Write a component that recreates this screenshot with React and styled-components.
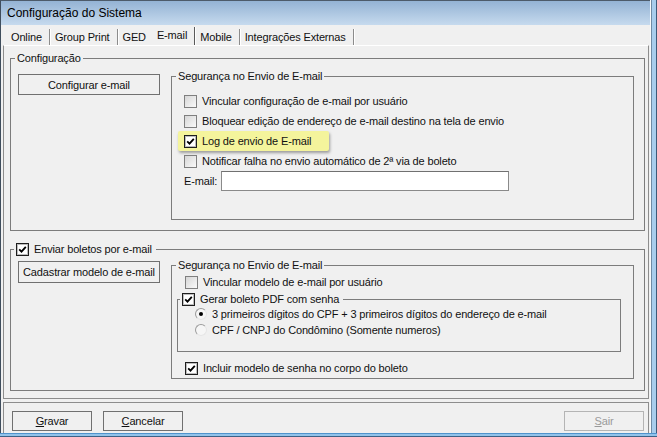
import React from 'react';
import styled, { createGlobalStyle } from 'styled-components';

const GlobalStyle = createGlobalStyle`
  html, body { margin: 0; padding: 0; background: #f0f0f0; }
  body {
    font-family: "Liberation Sans", Arial, sans-serif;
    font-size: 11px;
    letter-spacing: -0.15px;
    color: #111;
  }
  * { box-sizing: border-box; }
`;

const Window = styled.div`
  width: 657px;
  height: 437px;
  display: flex;
  flex-direction: column;
  background: #f0f0f0;
  overflow: hidden;
`;

const Frame = styled.div`
  flex: 1;
  display: flex;
  min-height: 0;
`;

const Main = styled.div`
  width: 650px;
  display: flex;
  flex-direction: column;
  border-left: 1px solid #3f4d5c;
  border-top: 1px solid #4d5b6a;
`;

const RightEdge = styled.div`
  width: 7px;
  background: linear-gradient(to right, #fafafa 0 1px, #6f8aa5 1px 2px, #a9cdec 2px 6px, #3d5a78 6px);
`;

const BottomEdge = styled.div`
  height: 4px;
  flex: none;
  background: linear-gradient(to bottom, #4f93cc 0 1px, #92c3ea 1px 3px, #3b6286 3px);
`;

const TitleBar = styled.div`
  height: 24px;
  flex: none;
  display: flex;
  align-items: center;
  padding-left: 6px;
  background: linear-gradient(#94b3d4, #c6daee);
  font-size: 12px;
  letter-spacing: 0;
  color: #000;
`;

const TabStrip = styled.div`
  height: 20px;
  flex: none;
  display: flex;
  align-items: flex-end;
  padding-left: 5px;
`;

const Tab = styled.div`
  height: ${p => (p.$active ? 18 : 16)}px;
  line-height: 16px;
  padding: 0 7px 0 ${p => (p.$first ? 5 : 4)}px;
  border-right: ${p => (p.$noSep ? 'none' : `1px solid ${p.$active ? '#5a5a5a' : '#8c8c8c'}`)};
  box-shadow: ${p => (p.$noSep ? 'none' : '1px 0 0 #ffffff')};
  margin-right: ${p => (p.$noSep ? 0 : 1)}px;
`;

const TabPanel = styled.div`
  height: 354px;
  flex: none;
  margin: 0 1px 0 2px;
  border: 1px solid #8d8d8d;
  border-top-color: #ffffff;
  padding: 5px 3px 0 6px;
  display: flex;
  flex-direction: column;
`;

const GroupBox = styled.fieldset`
  margin: ${p => p.$m || '0'};
  padding: ${p => p.$p || '0'};
  border: 1px solid #7c7c7c;
  min-width: 0;
  flex: ${p => (p.$grow ? 1 : 'none')};
`;

const Legend = styled.legend`
  margin-left: ${p => p.$ml ?? 4}px;
  padding: 0 2px;
  height: 14px;
  line-height: 14px;
`;

const LegendInner = styled.span`
  display: inline-flex;
  align-items: center;
  gap: 5px;
  height: 14px;
  padding-right: 2px;
`;

const GroupRow = styled.div`
  display: flex;
  align-items: flex-start;
  padding-top: ${p => p.$pt || 0}px;
`;

const Button = styled.button`
  width: ${p => p.$w}px;
  height: ${p => p.$h}px;
  margin: ${p => p.$m || '0'};
  flex: none;
  padding: 0;
  border: 1px solid ${p => (p.disabled ? '#b4b4b4' : '#707070')};
  background: #f0f0f0;
  font: inherit;
  letter-spacing: inherit;
  color: ${p => (p.disabled ? '#9a9a9a' : '#111')};
  text-align: center;
`;

const CheckRow = styled.div`
  display: flex;
  align-items: center;
  gap: 5px;
  height: 20px;
  padding-left: ${p => p.$indent}px;
`;

const Highlight = styled.div`
  width: fit-content;
  display: flex;
  align-items: center;
  gap: 5px;
  height: 20px;
  margin-left: ${p => p.$indent - 6}px;
  padding: 0 18px 0 6px;
  background: #f4f49c;
  border-radius: 2px;
  box-shadow: 1px 2px 3px rgba(0, 0, 0, 0.35);
`;

const RadioRow = styled.div`
  display: flex;
  align-items: center;
  gap: 5px;
  height: 16px;
  padding-left: 17px;
`;

const Box = styled.span`
  width: 13px;
  height: 13px;
  flex: none;
  display: flex;
  align-items: center;
  justify-content: center;
  border: 1px solid ${p => (p.$checked ? '#1e1e1e' : '#7f7f7f')};
  background: ${p => (p.$checked ? '#ffffff' : 'linear-gradient(135deg, #d6d6d6, #fafafa)')};
  box-shadow: ${p => (p.$checked ? 'inset 0 0 0 1px #bdbdbd' : 'none')};
`;

const RadioCircle = styled.span`
  width: 12px;
  height: 12px;
  flex: none;
  border-radius: 50%;
  border: 1px solid;
  border-color: #9c9c9c #e6e6e6 #e6e6e6 #9c9c9c;
  background: #f6f6f6;
  display: flex;
  align-items: center;
  justify-content: center;

  &::after {
    content: '';
    width: 4px;
    height: 4px;
    border-radius: 50%;
    background: ${p => (p.$checked ? '#000' : 'transparent')};
  }
`;

const FieldRow = styled.div`
  display: flex;
  align-items: center;
  gap: 4px;
  height: 20px;
  padding-left: 12px;
`;

const TextInput = styled.div`
  width: 288px;
  height: 20px;
  border: 1px solid #8a8a8a;
  border-top-color: #707070;
  background: #ffffff;
`;

const Footer = styled.div`
  height: 31px;
  flex: none;
  margin: 3px 1px 0 2px;
  border: 1px solid #8d8d8d;
  border-bottom: none;
  padding: 8px 4px 0 8px;
  display: flex;
  align-items: flex-start;
  gap: 11px;
`;

const Spacer = styled.div`
  flex: 1;
`;

const Gap = styled.div`
  height: ${p => p.$h}px;
`;

function Check({ checked }) {
  return (
    <Box $checked={checked}>
      {checked && (
        <svg width="9" height="9" viewBox="0 0 9 9">
          <path d="M1.2 4.4 L3.5 6.7 L7.8 1.8" fill="none" stroke="#000" strokeWidth="1.8" />
        </svg>
      )}
    </Box>
  );
}

function CheckItem({ checked, indent, children }) {
  return (
    <CheckRow $indent={indent}>
      <Check checked={checked} />
      <span>{children}</span>
    </CheckRow>
  );
}

function RadioItem({ checked, children }) {
  return (
    <RadioRow>
      <RadioCircle $checked={checked} />
      <span>{children}</span>
    </RadioRow>
  );
}

const tabs = ['Online', 'Group Print', 'GED', 'E-mail', 'Mobile', 'Integrações Externas'];

export default function App() {
  return (
    <>
      <GlobalStyle />
      <Window>
        <Frame>
          <Main>
            <TitleBar>Configuração do Sistema</TitleBar>
            <TabStrip>
              {tabs.map((t, i) => (
                <Tab key={t} $first={i === 0} $active={t === 'E-mail'} $noSep={t === 'GED'}>{t}</Tab>
              ))}
            </TabStrip>
            <TabPanel>
              <GroupBox $p="0 0 10px 0">
                <Legend>Configuração</Legend>
                <GroupRow $pt={4}>
                  <Button $w={142} $h={21} $m="5px 0 0 7px">Configurar e-mail</Button>
                  <GroupBox $grow $m="0 10px 0 11px" $p="8px 0 28px 0">
                    <Legend>Segurança no Envio de E-mail</Legend>
                    <CheckItem indent={12}>Vincular configuração de e-mail por usuário</CheckItem>
                    <CheckItem indent={12}>Bloquear edição de endereço de e-mail destino na tela de envio</CheckItem>
                    <Highlight $indent={12}>
                      <Check checked />
                      <span>Log de envio de E-mail</span>
                    </Highlight>
                    <CheckItem indent={12}>Notificar falha no envio automático de 2ª via de boleto</CheckItem>
                    <FieldRow>
                      <span>E-mail:</span>
                      <TextInput />
                    </FieldRow>
                  </GroupBox>
                </GroupRow>
              </GroupBox>

              <GroupBox $m="11px 0 0 0" $p="0 0 11px 0">
                <Legend $ml={3}>
                  <LegendInner>
                    <Check checked />
                    <span>Enviar boletos por e-mail</span>
                  </LegendInner>
                </Legend>
                <GroupRow $pt={2}>
                  <Button $w={142} $h={22} $m="3px 0 0 7px">Cadastrar modelo de e-mail</Button>
                  <GroupBox $grow $m="0 10px 0 11px" $p="0">
                    <Legend>Segurança no Envio de E-mail</Legend>
                    <CheckItem indent={13}>Vincular modelo de e-mail por usuário</CheckItem>
                    <GroupBox $m="0 12px 0 5px" $p="0 0 13px 0">
                      <Legend $ml={2}>
                        <LegendInner>
                          <Check checked />
                          <span>Gerar boleto PDF com senha</span>
                        </LegendInner>
                      </Legend>
                      <RadioItem checked>3 primeiros dígitos do CPF + 3 primeiros dígitos do endereço de e-mail</RadioItem>
                      <RadioItem>CPF / CNPJ do Condômino (Somente numeros)</RadioItem>
                    </GroupBox>
                    <Gap $h={6} />
                    <CheckItem checked indent={13}>Incluir modelo de senha no corpo do boleto</CheckItem>
                  </GroupBox>
                </GroupRow>
              </GroupBox>
            </TabPanel>
            <Footer>
              <Button $w={80} $h={20}><u>G</u>ravar</Button>
              <Button $w={80} $h={20}><u>C</u>ancelar</Button>
              <Spacer />
              <Button $w={80} $h={20} disabled><u>S</u>air</Button>
            </Footer>
          </Main>
          <RightEdge />
        </Frame>
        <BottomEdge />
      </Window>
    </>
  );
}
